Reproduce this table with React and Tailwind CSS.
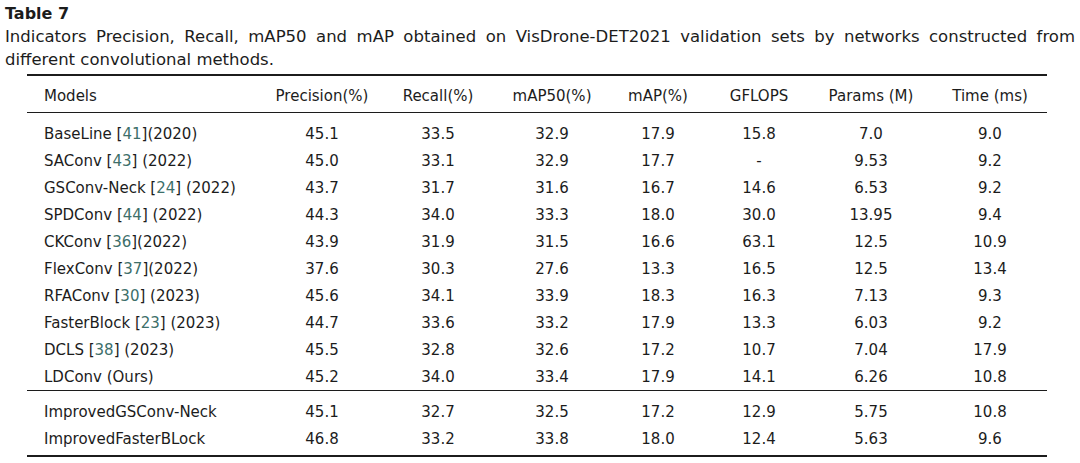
import React from 'react';

const cols = ['w-[238px]', 'w-[114px]', 'w-[118px]', 'w-[110px]', 'w-[102px]', 'w-[100px]', 'w-[124px]', 'w-[114px]'];

const headers = ['Models', 'Precision(%)', 'Recall(%)', 'mAP50(%)', 'mAP(%)', 'GFLOPS', 'Params (M)', 'Time (ms)'];

const rows = [
    { name: 'BaseLine ', cite: '41', year: '(2020)', vals: ['45.1', '33.5', '32.9', '17.9', '15.8', '7.0', '9.0'] },
    { name: 'SAConv ', cite: '43', year: ' (2022)', vals: ['45.0', '33.1', '32.9', '17.7', '-', '9.53', '9.2'] },
    { name: 'GSConv-Neck ', cite: '24', year: ' (2022)', vals: ['43.7', '31.7', '31.6', '16.7', '14.6', '6.53', '9.2'] },
    { name: 'SPDConv ', cite: '44', year: ' (2022)', vals: ['44.3', '34.0', '33.3', '18.0', '30.0', '13.95', '9.4'] },
    { name: 'CKConv ', cite: '36', year: '(2022)', vals: ['43.9', '31.9', '31.5', '16.6', '63.1', '12.5', '10.9'] },
    { name: 'FlexConv ', cite: '37', year: '(2022)', vals: ['37.6', '30.3', '27.6', '13.3', '16.5', '12.5', '13.4'] },
    { name: 'RFAConv ', cite: '30', year: ' (2023)', vals: ['45.6', '34.1', '33.9', '18.3', '16.3', '7.13', '9.3'] },
    { name: 'FasterBlock ', cite: '23', year: ' (2023)', vals: ['44.7', '33.6', '33.2', '17.9', '13.3', '6.03', '9.2'] },
    { name: 'DCLS ', cite: '38', year: ' (2023)', vals: ['45.5', '32.8', '32.6', '17.2', '10.7', '7.04', '17.9'] },
    { name: 'LDConv (Ours)', vals: ['45.2', '34.0', '33.4', '17.9', '14.1', '6.26', '10.8'] },
];

const improved = [
    { name: 'ImprovedGSConv-Neck', vals: ['45.1', '32.7', '32.5', '17.2', '12.9', '5.75', '10.8'] },
    { name: 'ImprovedFasterBLock', vals: ['46.8', '33.2', '33.8', '18.0', '12.4', '5.63', '9.6'] },
];

const Row = ({ row }) => (
    <div className="flex h-[27px] items-center pt-[3px]">
        <div className={`${cols[0]} pl-[17px] whitespace-pre`}>
            {row.name}
            {row.cite && (
                <>
                    [<span className="text-[#3d6f6a]">{row.cite}</span>]{row.year}
                </>
            )}
        </div>
        {row.vals.map((v, i) => (
            <div key={i} className={`${cols[i + 1]} text-center`}>{v}</div>
        ))}
    </div>
);

export default function App() {
    return (
        <div className="w-[1080px] h-[463px] bg-white text-[#1c1c1c] text-[15px] font-['DejaVu_Sans',sans-serif] overflow-hidden">
            <div className="px-[5px] pt-[2px]">
                <div className="text-[16px] font-bold leading-[23px]">Table 7</div>
                <div className="text-[16.5px] leading-[23px]">
                    <div className="text-justify [text-align-last:justify]">
                        Indicators Precision, Recall, mAP50 and mAP obtained on VisDrone-DET2021 validation sets by networks constructed from
                    </div>
                    <div>different convolutional methods.</div>
                </div>
            </div>

            <div className="ml-[27px] w-[1020px] mt-[3px]">
                <div className="border-t-2 border-[#1c1c1c]" />
                <div className="flex h-[36px] items-center pt-[4px]">
                    {headers.map((h, i) => (
                        <div key={h} className={`${cols[i]} ${i === 0 ? 'pl-[17px]' : 'text-center'}`}>{h}</div>
                    ))}
                </div>
                <div className="border-t border-[#1c1c1c]" />
                <div className="pt-[6px] pb-[1px]">
                    {rows.map((r) => <Row key={r.name} row={r} />)}
                </div>
                <div className="border-t border-[#1c1c1c]" />
                <div className="pt-[6px] pb-[4px]">
                    {improved.map((r) => <Row key={r.name} row={r} />)}
                </div>
                <div className="border-t-2 border-[#1c1c1c]" />
            </div>
        </div>
    );
}
